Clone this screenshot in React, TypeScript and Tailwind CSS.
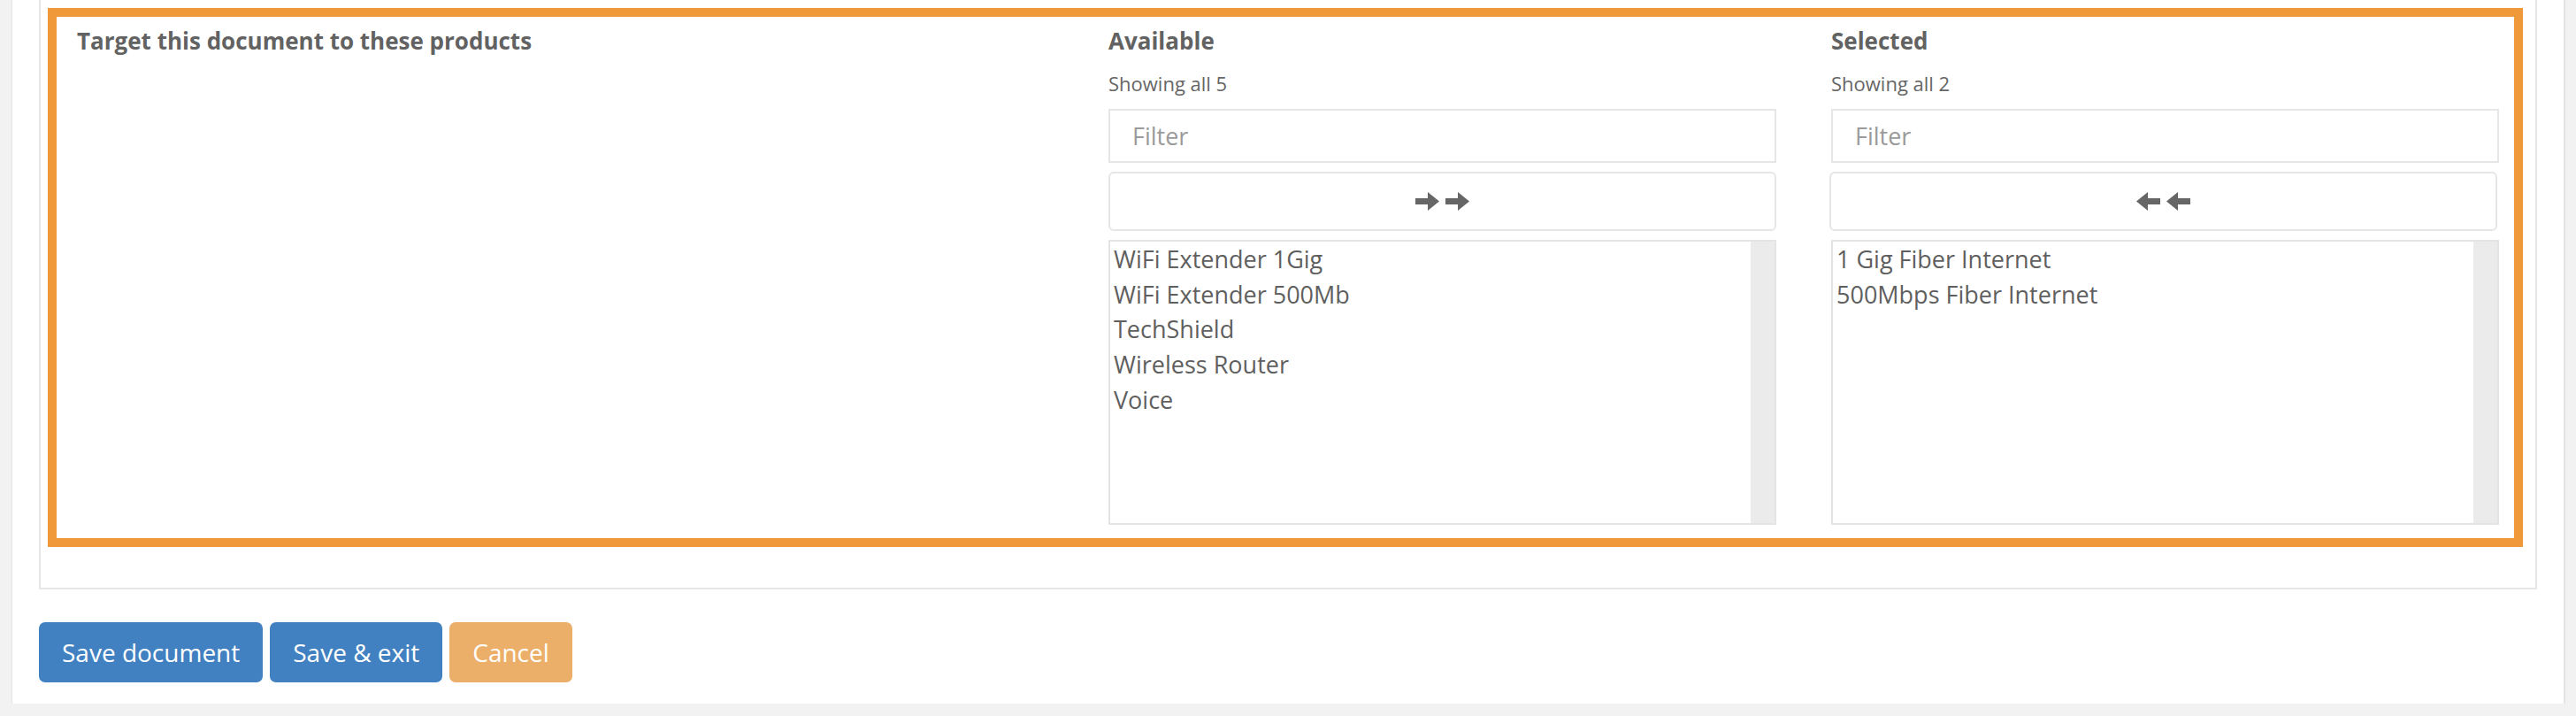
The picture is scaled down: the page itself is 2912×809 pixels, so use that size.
import clsx from 'clsx'

const available = ['WiFi Extender 1Gig', 'WiFi Extender 500Mb', 'TechShield', 'Wireless Router', 'Voice']
const selected = ['1 Gig Fiber Internet', '500Mbps Fiber Internet']

function Arrow({ dir }: { dir: 'left' | 'right' }) {
  return (
    <svg width="27" height="21" viewBox="0 0 27 21" className="fill-[#666]" aria-hidden>
      {dir === 'right' ? (
        <path d="M0 7h14V0l13 10.5L14 21v-7H0z" />
      ) : (
        <path d="M27 7H13V0L0 10.5 13 21v-7h14z" />
      )}
    </svg>
  )
}

interface ColumnProps {
  title: string
  items: string[]
  dir: 'left' | 'right'
  className?: string
}

function ListColumn({ title, items, dir, className }: ColumnProps) {
  return (
    <div className={clsx('flex w-[755px] shrink-0 flex-col', className)}>
      <h4 className="text-[26px] font-bold leading-[37px] text-[#626262]">{title}</h4>
      <p className="mt-[14px] text-[22px] leading-[31px] text-[#666]">Showing all {items.length}</p>
      <input
        type="text"
        placeholder="Filter"
        className="mt-[13px] h-[61px] w-full border-2 border-[#e6e6e6] bg-white px-[25px] text-[27px] text-[#555] outline-none placeholder:text-[#9a9a9a]"
      />
      <button
        type="button"
        className={clsx(
          'mt-[10px] flex h-[67px] w-full items-center justify-center gap-[7px] rounded-[6px] border-2 border-[#e6e6e6] bg-white',
          dir === 'left' && '-ml-[2px]'
        )}
      >
        <Arrow dir={dir} />
        <Arrow dir={dir} />
      </button>
      <div className="mt-[10px] flex h-[322px] border-2 border-[#e4e4e4] bg-white">
        <ul className="flex-1 pl-[4px]">
          {items.map((item) => (
            <li key={item} className="text-[27px] leading-[39.7px] text-[#5f5f5f]">
              {item}
            </li>
          ))}
        </ul>
        <div className="w-[27px] bg-[#ebebeb]" />
      </div>
    </div>
  )
}

export default function App() {
  return (
    <div className="h-[809px] w-full overflow-hidden bg-[#f2f2f2] pl-[13px] pr-[12px] font-['Open_Sans',sans-serif]">
      <div className="h-[795px] border-l border-r-2 border-[#e4e4e4] bg-white px-[30px]">
        <div className="border-x-2 border-b-2 border-[#e6e6e6] pb-[46px] pl-[8px] pr-[14px] pt-[9px]">
          <div className="flex border-[10px] border-[#f0993a] pb-[15px] pr-[17px] pt-[9px]">
            <div className="flex-1 pl-[23px]">
              <label className="text-[26px] font-bold leading-[37px] text-[#626262]">
                Target this document to these products
              </label>
            </div>
            <ListColumn title="Available" items={available} dir="right" />
            <ListColumn title="Selected" items={selected} dir="left" className="ml-[62px]" />
          </div>
        </div>
        <div className="mt-[37px] flex gap-[8px]">
          <button
            type="button"
            className="h-[68px] rounded-[7px] bg-[#4281c1] px-[26px] text-[28px] leading-[40px] text-white"
          >
            Save document
          </button>
          <button
            type="button"
            className="h-[68px] rounded-[7px] bg-[#4281c1] px-[26px] text-[28px] leading-[40px] text-white"
          >
            Save &amp; exit
          </button>
          <button
            type="button"
            className="h-[68px] rounded-[7px] bg-[#ecaf69] px-[26px] text-[28px] leading-[40px] text-white"
          >
            Cancel
          </button>
        </div>
      </div>
    </div>
  )
}
